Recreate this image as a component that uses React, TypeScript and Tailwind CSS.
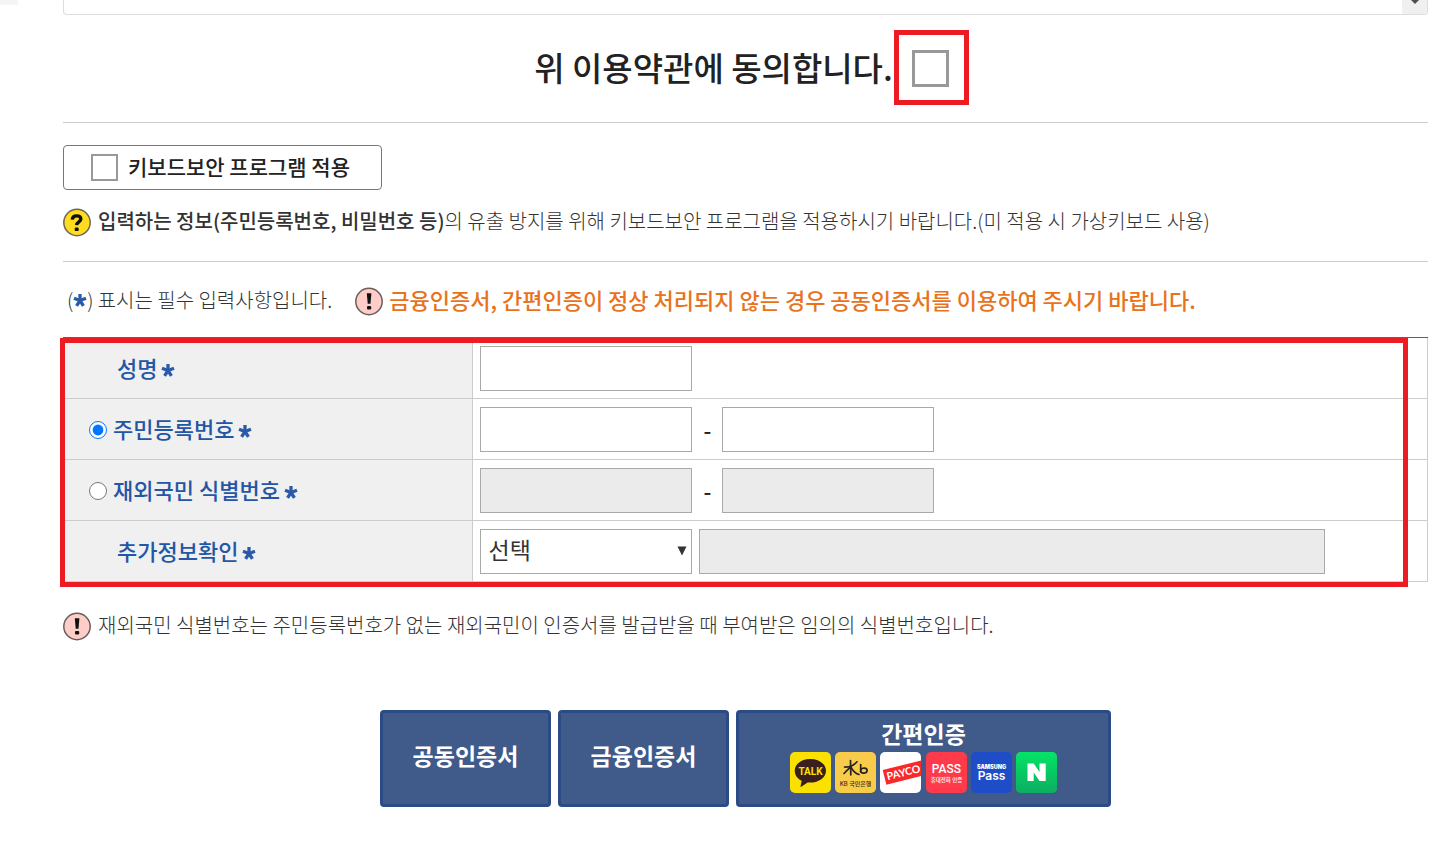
import { useState, type ReactNode } from "react"

type IdType = "resident" | "overseas"

const FIELD =
  "h-[45px] w-[212px] shrink-0 rounded-none border border-[#a9a9a9] bg-white px-2 pb-1 text-[23px] text-[#333] outline-none disabled:bg-[#ebebeb]"

const AUTH_BUTTON = "h-[97px] rounded-[4px] border-3 border-[#2b4b87] bg-[#405a8a]"

function RequiredMark() {
  return (
    <svg viewBox="0 0 14 14" className="h-[14px] w-[14px] shrink-0" role="img" aria-label="필수">
      <g stroke="#2a5aa8" strokeWidth="3.3" strokeLinecap="butt">
        <path d="M7 7.5V1" />
        <path d="M7 7.5L1 5.2" />
        <path d="M7 7.5L13 5.2" />
        <path d="M7 7.5L3.6 12.8" />
        <path d="M7 7.5L10.4 12.8" />
      </g>
    </svg>
  )
}

function QuestionIcon() {
  return (
    <svg viewBox="0 0 28 29" className="h-[29px] w-[28px] shrink-0" aria-hidden="true">
      <circle cx="14" cy="14.5" r="13.2" fill="#ffdc1e" stroke="#6b675a" strokeWidth="1.5" />
      <path
        d="M9.3 11.6C9.5 9 11.2 7.9 13.6 7.9c2.8 0 4.2 1.2 4.2 3.1 0 2.900-3.900 2.900-4.200 6.200"
        fill="none"
        stroke="#111"
        strokeWidth="3.4"
      />
      <rect x="11.700" y="19.500" width="4" height="3.600" rx="1.200" fill="#111" />
    </svg>
  )
}

function AlertIcon() {
  return (
    <svg viewBox="0 0 28 29" className="h-[29px] w-[28px] shrink-0" aria-hidden="true">
      <circle cx="14" cy="14.5" r="13.2" fill="#ffcdc8" stroke="#6a5d5c" strokeWidth="1.5" />
      <path d="M11.8 6.2h4.6l-.9 10.6h-2.8z" fill="#111" />
      <rect x="12" y="19" width="4.2" height="3.6" rx="1" fill="#111" />
    </svg>
  )
}

/* Simple-auth provider logos */
function Logo({ fill, children }: { fill: string; children: ReactNode }) {
  return (
    <svg viewBox="0 0 41 41" className="h-[41px] w-[41px] overflow-hidden rounded-[5px]" aria-hidden="true">
      <rect width="41" height="41" fill={fill} />
      {children}
    </svg>
  )
}

function ProviderLogos() {
  return (
    <span className="flex w-[268px] justify-between">
      <Logo fill="#fae100">
        <path
          d="M20.3 7C11.5 7 4.7 12 4.7 18.7c0 4.3 2.800 8 7 10.100l-1.200 5.600c-.1.500.4.700.8.400l6.300-4.400c.9.100 1.800.200 2.700.200 8.700 0 15.700-5.300 15.700-11.900S29 7 20.300 7z"
          fill="#3b1e1e"
        />
        <text x="20.5" y="23" textAnchor="middle" fontSize="10" fontWeight="700" fill="#fae100" fontFamily="Roboto, sans-serif">
          TALK
        </text>
      </Logo>
      <Logo fill="#f8cb4a">
        <g fill="none" stroke="#27221b" strokeWidth="1.7" strokeLinecap="round">
          <path d="M15.5 8.500l.3 14.500" />
          <path d="M9.500 15C14 15.300 19 13.300 22 9.800" />
          <path d="M15.500 14.800L9 21.500" />
          <path d="M15.800 14.800C17.500 18.500 20 21.200 24 22.500" />
          <path d="M25.700 12.500v7.500" />
          <path d="M25.700 17.800c1.400-2.400 6.500-2.200 6.400.7-.1 3.200-5.500 3.500-6.400.9" />
        </g>
        <text x="20.5" y="33.5" textAnchor="middle" fontSize="6" fontWeight="500" fill="#3b3020" fontFamily="Inter, 'Noto Sans CJK KR', sans-serif">
          KB 국민은행
        </text>
      </Logo>
      <Logo fill="#ffffff">
        <g transform="rotate(-14 22 21)">
          <rect x="4" y="13.5" width="50" height="15" fill="#fa2828" />
          <text x="6.5" y="24.500" fontSize="10.5" fontWeight="700" fill="#fff" fontFamily="Lato, sans-serif">
            PAYCO
          </text>
        </g>
      </Logo>
      <Logo fill="#fe3a4b">
        <text x="20.5" y="21" textAnchor="middle" fontSize="12" fontWeight="500" fill="#fff" fontFamily="Roboto, sans-serif">
          PASS
        </text>
        <text x="20.5" y="30" textAnchor="middle" fontSize="5.5" fill="#ffe3e5" fontFamily="'Noto Sans CJK KR', sans-serif">
          휴대전화 인증
        </text>
      </Logo>
      <Logo fill="#1f4cc7">
        <text x="20.5" y="16.5" textAnchor="middle" fontSize="5.5" fontWeight="900" fill="#fff" fontFamily="Inter, sans-serif">
          SAMSUNG
        </text>
        <text x="20.5" y="28" textAnchor="middle" fontSize="12" fontWeight="600" fill="#fff" fontFamily="Inter, sans-serif">
          Pass
        </text>
      </Logo>
      <Logo fill="#04c863">
        <defs>
          <linearGradient id="naver" x1="0" y1="0" x2="0" y2="1">
            <stop offset="0" stopColor="#04e466" />
            <stop offset="1" stopColor="#0cad60" />
          </linearGradient>
        </defs>
        <rect width="41" height="41" fill="url(#naver)" />
        <path d="M11.5 11.500h6.200l5.800 8.600v-8.600h6.200V29h-6.200l-5.800-8.600V29h-6.200z" fill="#fff" />
      </Logo>
    </span>
  )
}

function FormRow({ head, children }: { head: ReactNode; children: ReactNode }) {
  return (
    <tr>
      <th
        scope="row"
        className="w-[30%] border-r border-b border-[#ccc] bg-[#f0f0f0] pb-[3px] text-left text-[22px] leading-8 font-medium text-[#2356a5] [&_input]:mt-1 [&_svg]:mt-[6px]"
      >
        {head}
      </th>
      <td className="border-r border-b border-[#ccc] pt-2 pr-4 pb-[7px] pl-[7px]">
        <div className="flex items-center">{children}</div>
      </td>
    </tr>
  )
}

export default function App() {
  const [idType, setIdType] = useState<IdType>("resident")
  const overseas = idType === "overseas"

  return (
    <div className="relative min-h-screen bg-white font-['Noto_Sans_CJK_KR',sans-serif] text-[#333]">
      <div className="absolute top-0 left-0 h-[5px] w-[18px] bg-[#f5f5f5]" />

      <main className="pr-[13px] pl-[63px]">
        {/* End of the terms box */}
        <div className="flex h-[15px] justify-end overflow-hidden rounded-b-[4px] border border-t-0 border-[#ddd]">
          <div className="flex w-[25px] justify-center bg-[#f0f0f0]">
            <svg viewBox="0 0 8 4" className="h-1 w-2" aria-hidden="true">
              <path d="M0 0h8L4 4z" fill="#505050" />
            </svg>
          </div>
        </div>

        <div className="flex h-[107px] items-center justify-center pr-2">
          <label htmlFor="agree" className="pb-1 text-[33px] leading-[48px] font-medium text-[#222]">
            위 이용약관에 동의합니다.
          </label>
          <span className="relative ml-[19px] flex">
            <input
              id="agree"
              type="checkbox"
              className="h-[37px] w-[37px] appearance-none border-3 border-[#999] bg-white checked:bg-[#3f5a8a]"
            />
            <span className="pointer-events-none absolute -top-5 -right-5 -bottom-[18px] -left-[18px] border-5 border-[#ed1c24]" />
          </span>
        </div>

        <section className="border-y border-[#ccc] pt-[22px] pb-6">
          <label className="flex h-[45px] w-[319px] items-center rounded-[4px] border border-[#777] pl-[27px] text-[21px] font-medium text-[#222]">
            <input
              type="checkbox"
              className="mr-[10px] h-[27px] w-[27px] shrink-0 appearance-none border-2 border-[#999] bg-white checked:bg-[#3f5a8a]"
            />
            <span className="pb-[2px]">키보드보안 프로그램 적용</span>
          </label>
          <div className="mt-[18px] flex items-center gap-[7px]">
            <QuestionIcon />
            <p className="pb-[3px] text-[20px] leading-[26px] font-light">
              <b className="font-medium">입력하는 정보(주민등록번호, 비밀번호 등)</b>의 유출 방지를 위해 키보드보안 프로그램을
              적용하시기 바랍니다.(미 적용 시 가상키보드 사용)
            </p>
          </div>
        </section>

        <div className="flex h-[75px] items-center pt-1">
          <p className="flex items-center pb-[3px] pl-1 text-[20px] leading-7 font-light">
            <span className="flex items-center">
              (<RequiredMark />)
            </span>
            <span className="pl-1">표시는 필수 입력사항입니다.</span>
          </p>
          <p className="ml-[23px] flex items-center gap-[6px] text-[22px] leading-[26px] font-medium text-[#e8731c]">
            <AlertIcon />
            <span className="pb-[6px]">
              금융인증서, 간편인증이 정상 처리되지 않는 경우 공동인증서를 이용하여 주시기 바랍니다.
            </span>
          </p>
        </div>

        <div className="relative">
          <table className="w-full border-separate border-spacing-0 border-t border-[#3a67ad]">
            <tbody>
              <FormRow
                head={
                  <label htmlFor="name" className="flex items-center gap-1 pl-[54px]">
                    성명 <RequiredMark />
                  </label>
                }
              >
                <input id="name" type="text" className={FIELD} />
              </FormRow>
              <FormRow
                head={
                  <label className="flex items-center gap-1 pl-[26px]">
                    <input
                      type="radio"
                      name="idType"
                      className="mr-[2px] h-[18px] w-[18px]"
                      checked={!overseas}
                      onChange={() => setIdType("resident")}
                    />
                    주민등록번호 <RequiredMark />
                  </label>
                }
              >
                <input type="text" aria-label="주민등록번호 앞자리" className={FIELD} disabled={overseas} />
                <span className="w-[30px] pl-[2px] text-center text-[22px] font-medium text-[#222]">-</span>
                <input type="password" aria-label="주민등록번호 뒷자리" className={FIELD} disabled={overseas} />
              </FormRow>
              <FormRow
                head={
                  <label className="flex items-center gap-1 pl-[26px]">
                    <input
                      type="radio"
                      name="idType"
                      className="mr-[2px] h-[18px] w-[18px]"
                      checked={overseas}
                      onChange={() => setIdType("overseas")}
                    />
                    재외국민 식별번호 <RequiredMark />
                  </label>
                }
              >
                <input type="text" aria-label="재외국민 식별번호 앞자리" className={FIELD} disabled={!overseas} />
                <span className="w-[30px] pl-[2px] text-center text-[22px] font-medium text-[#222]">-</span>
                <input type="password" aria-label="재외국민 식별번호 뒷자리" className={FIELD} disabled={!overseas} />
              </FormRow>
              <FormRow
                head={
                  <label htmlFor="extra" className="flex items-center gap-1 pl-[54px]">
                    추가정보확인 <RequiredMark />
                  </label>
                }
              >
                <span className="relative flex">
                  <select id="extra" className={`${FIELD} appearance-none`}>
                    <option>선택</option>
                  </select>
                  <svg viewBox="0 0 10 10" className="pointer-events-none absolute top-[17px] right-[5px] h-[10px] w-[10px]" aria-hidden="true">
                    <path d="M0.500 0.500h9L5 9.500z" fill="#333" />
                  </svg>
                </span>
                <input
                  type="text"
                  aria-label="추가정보"
                  disabled
                  className="ml-[7px] h-[45px] w-full max-w-[626px] border border-[#a9a9a9] bg-[#ebebeb] px-2 text-[23px]"
                />
              </FormRow>
            </tbody>
          </table>
          <div className="pointer-events-none absolute top-px right-5 -bottom-[5px] -left-[3px] border-5 border-[#ed1c24]" />
        </div>

        <p className="mt-[30px] flex items-center gap-[7px] text-[20px] leading-[26px] font-light">
          <AlertIcon />
          <span className="pb-[3px]">
            재외국민 식별번호는 주민등록번호가 없는 재외국민이 인증서를 발급받을 때 부여받은 임의의 식별번호입니다.
          </span>
        </p>

        <div className="mt-[69px] flex justify-center gap-[7px] text-[23px] leading-8 font-bold text-white">
          <button type="button" className={`${AUTH_BUTTON} w-[171px] pb-[7px]`}>
            공동인증서
          </button>
          <button type="button" className={`${AUTH_BUTTON} w-[171px] pb-[7px]`}>
            금융인증서
          </button>
          <button type="button" className={`${AUTH_BUTTON} flex w-[375px] flex-col items-center justify-center gap-[3px] pb-[7px]`}>
            간편인증
            <ProviderLogos />
          </button>
        </div>
      </main>
    </div>
  )
}
